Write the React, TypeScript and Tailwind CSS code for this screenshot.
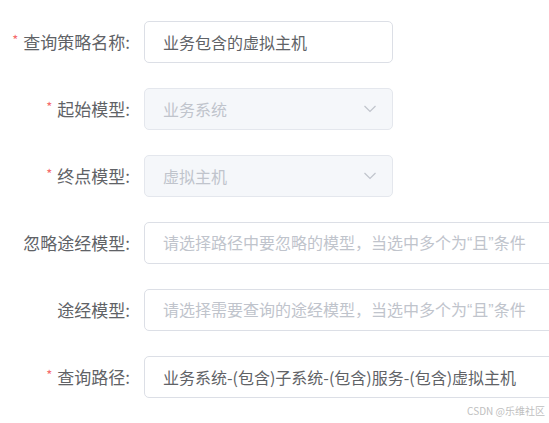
import React from "react";

type Row = {
  label: string;
  required?: boolean;
  value?: string;
  placeholder?: string;
  select?: boolean;
  wide?: boolean;
};

const ROWS: Row[] = [
  { label: "查询策略名称:", required: true, value: "业务包含的虚拟主机" },
  { label: "起始模型:", required: true, value: "业务系统", select: true },
  { label: "终点模型:", required: true, value: "虚拟主机", select: true },
  { label: "忽略途经模型:", placeholder: "请选择路径中要忽略的模型，当选中多个为", wide: true },
  { label: "途经模型:", placeholder: "请选择需要查询的途经模型，当选中多个为", wide: true },
  {
    label: "查询路径:",
    required: true,
    value: "业务系统-(包含)子系统-(包含)服务-(包含)虚拟主机",
    wide: true,
  },
];

function Chevron() {
  return (
    <svg width="14" height="8" viewBox="0 0 14 8" fill="none" className="shrink-0">
      <polyline points="1.5,1 7,6.5 12.5,1" stroke="#c0c4cc" strokeWidth="1.2" />
    </svg>
  );
}

// the quotes are narrow in the shot, so they come from a latin font
function Placeholder({ text }: { text: string }) {
  return (
    <span className="text-[#c0c4cc] whitespace-nowrap">
      {text}
      <span className="font-['Liberation_Sans']">“</span>且<span className="font-['Liberation_Sans']">”</span>条件
    </span>
  );
}

function Field({ row }: { row: Row }) {
  const box = row.select
    ? "w-[249px] bg-[#f5f7fa] border-[#e4e7ed] text-[#c0c4cc]"
    : row.wide
      ? "w-[440px] bg-white border-[#dcdfe6] text-[#606266]"
      : "w-[249px] bg-white border-[#dcdfe6] text-[#606266]";
  return (
    <div className="flex items-center h-[42px]">
      <div className="w-[130px] shrink-0 flex items-center justify-end text-[17px] text-[#606266]">
        {row.required && <span className="text-[#f56c6c] text-[13px] mr-[5px] -mt-[4px]">*</span>}
        <span>{row.label}</span>
      </div>
      <div
        className={`ml-[14px] h-[42px] shrink-0 rounded-[5px] border flex items-center justify-between pl-[18px] pr-[15px] text-[16px] ${box}`}
      >
        {row.placeholder ? (
          <Placeholder text={row.placeholder} />
        ) : (
          <span className="whitespace-nowrap">{row.value}</span>
        )}
        {row.select && <Chevron />}
      </div>
    </div>
  );
}

export default function App() {
  return (
    <div
      className="relative w-[549px] h-[423px] overflow-hidden bg-white"
      style={{ fontFamily: '"Noto Sans CJK SC", "Noto Sans", sans-serif' }}
    >
      <div className="flex flex-col gap-[25px] pt-[21px]">
        {ROWS.map((r) => (
          <Field key={r.label} row={r} />
        ))}
      </div>
      <div className="absolute right-[4px] bottom-[5px] text-[10px] text-[#c0c0c0]">CSDN @乐维社区</div>
    </div>
  );
}
